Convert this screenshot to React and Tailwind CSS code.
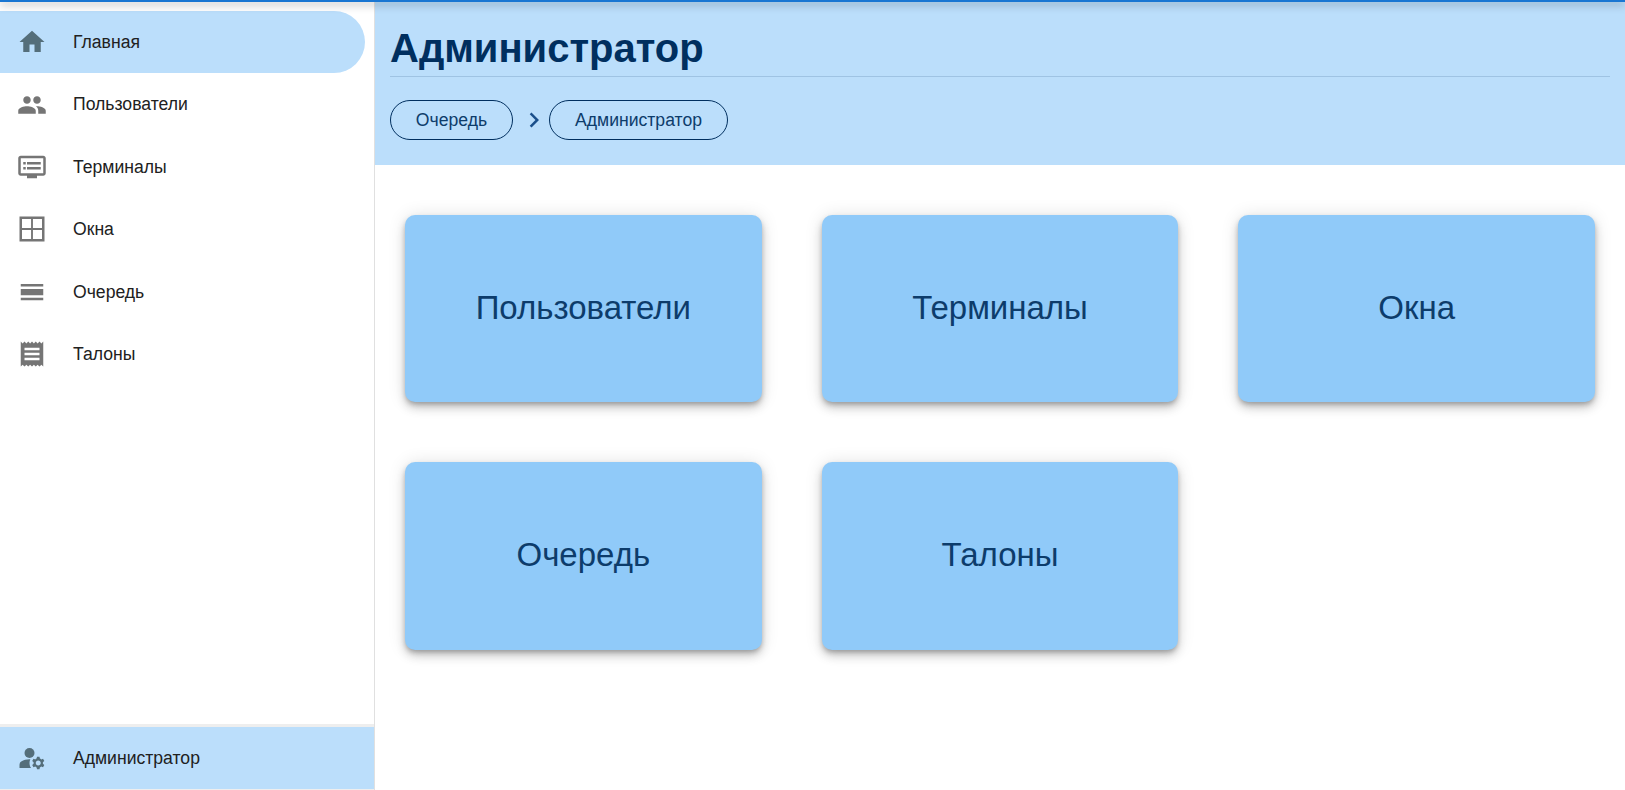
const icons = {
  home: <path d="M10 20v-6h4v6h5v-8h3L12 3 2 12h3v8z" />,
  people: (
    <path d="M16 11c1.66 0 2.99-1.34 2.99-3S17.66 5 16 5c-1.66 0-3 1.34-3 3s1.34 3 3 3zm-8 0c1.66 0 2.99-1.34 2.99-3S9.66 5 8 5C6.34 5 5 6.34 5 8s1.34 3 3 3zm0 2c-2.33 0-7 1.17-7 3.5V19h14v-2.5c0-2.33-4.67-3.5-7-3.5zm8 0c-.29 0-.62.02-.97.05 1.16.84 1.97 1.97 1.97 3.45V19h6v-2.5c0-2.33-4.67-3.5-7-3.5z" />
  ),
  dvr: (
    <path d="M21 3H3c-1.1 0-2 .9-2 2v12c0 1.1.9 2 2 2h5v2h8v-2h5c1.1 0 1.99-.9 1.99-2L23 5c0-1.1-.9-2-2-2zm0 14H3V5h18v12zm-2-9H8v2h11V8zm0 4H8v2h11v-2zM7 8H5v2h2V8zm0 4H5v2h2v-2z" />
  ),
  windows: (
    <path d="M2 2v20h20V2H2zm9.25 18H4v-7.25h7.25V20zm0-8.75H4V4h7.25v7.25zM20 20h-7.25v-7.25H20V20zm0-8.75h-7.25V4H20v7.25z" />
  ),
  queue: <path d="M3 5.5h18v2H3v-2zm0 4h18v5H3v-5zm0 7h18v2H3v-2z" />,
  receipt: (
    <path d="M18 17H6v-2h12v2zm0-4H6v-2h12v2zm0-4H6V7h12v2zM3 22l1.5-1.5L6 22l1.5-1.5L9 22l1.5-1.5L12 22l1.5-1.5L15 22l1.5-1.5L18 22l1.5-1.5L21 22V2l-1.5 1.5L18 2l-1.5 1.5L15 2l-1.5 1.5L12 2l-1.5 1.5L9 2 7.5 3.5 6 2 4.5 3.5 3 2v20z" />
  ),
  admin: (
    <>
      <circle cx="10" cy="8" r="4" />
      <path d="M10.67 13.02c-.22-.01-.44-.02-.67-.02-2.42 0-4.68.67-6.61 1.82-.88.52-1.39 1.5-1.39 2.53V20h9.26c-.79-1.13-1.26-2.51-1.26-4 0-1.07.25-2.07.67-2.98z" />
      <path d="M20.75 16c0-.22-.03-.42-.06-.63l1.14-1.01-1-1.73-1.45.49c-.32-.27-.68-.48-1.08-.63L18 11h-2l-.3 1.49c-.4.15-.76.36-1.08.63l-1.45-.49-1 1.73 1.14 1.01c-.03.21-.06.41-.06.63s.03.42.06.63l-1.14 1.01 1 1.73 1.45-.49c.32.27.68.48 1.08.63L16 21h2l.3-1.49c.4-.15.76-.36 1.08-.63l1.45.49 1-1.73-1.14-1.01c.03-.21.06-.41.06-.63zM17 18c-1.1 0-2-.9-2-2s.9-2 2-2 2 .9 2 2-.9 2-2 2z" />
    </>
  ),
};

const navItems = [
  { label: "Главная", icon: "home", active: true },
  { label: "Пользователи", icon: "people" },
  { label: "Терминалы", icon: "dvr" },
  { label: "Окна", icon: "windows" },
  { label: "Очередь", icon: "queue" },
  { label: "Талоны", icon: "receipt" },
];

const cards = ["Пользователи", "Терминалы", "Окна", "Очередь", "Талоны"];

function Icon({ name, className }) {
  return (
    <svg viewBox="0 0 24 24" fill="currentColor" className={className}>
      {icons[name]}
    </svg>
  );
}

function NavRow({ item }) {
  return (
    <div
      className={`flex h-[62.4px] items-center pl-[16.5px] ${
        item.active ? "mr-[9px] rounded-r-[32px] bg-[#bbdefb]" : ""
      }`}
    >
      <Icon
        name={item.icon}
        className={`h-[30px] w-[30px] ${item.active ? "text-[#546e7a]" : "text-[#757575]"}`}
      />
      <span className="ml-[26.5px] text-[17.6px] text-[#212121]">{item.label}</span>
    </div>
  );
}

export default function App() {
  return (
    <div className="relative flex h-[790px] overflow-hidden bg-white font-['Liberation_Sans',Arial,sans-serif]">
      <div className="absolute inset-x-0 top-0 z-10 h-[2px] bg-[#1976d2] shadow-[0_2px_8px_rgba(0,0,0,0.55)]" />

      <aside className="flex w-[375px] shrink-0 flex-col border-r border-[#e0e0e0] bg-white">
        <nav className="flex-1 pt-[11px]">
          {navItems.map((item) => (
            <NavRow key={item.label} item={item} />
          ))}
        </nav>
        <div className="border-t-[3px] border-b border-[#eeeeee]">
          <div className="flex h-[62px] items-center bg-[#bbdefb] pl-[16.5px]">
            <Icon name="admin" className="h-[30px] w-[30px] text-[#546e7a]" />
            <span className="ml-[26.5px] text-[17.6px] text-[#212121]">Администратор</span>
          </div>
        </div>
      </aside>

      <main className="flex-1">
        <header className="h-[165px] bg-[#bbdefb] px-[15px] pt-[20px]">
          <h1 className="h-[56px] text-[40px] leading-[56px] font-bold text-[#002f5f]">
            Администратор
          </h1>
          <div className="h-px bg-[#9fc3e3]" />
          <div className="mt-[23px] flex items-center text-[17.6px] text-[#0d3c6b]">
            <div className="flex h-[40px] w-[123px] items-center justify-center rounded-[20px] border border-[#002f5f]">
              Очередь
            </div>
            <svg viewBox="0 0 24 24" fill="#1a4f8b" className="ml-[6px] h-[30px] w-[30px]">
              <path d="M10 6 8.59 7.41 13.17 12l-4.58 4.59L10 18l6-6z" />
            </svg>
            <div className="flex h-[40px] w-[179px] items-center justify-center rounded-[20px] border border-[#002f5f]">
              Администратор
            </div>
          </div>
        </header>

        <section className="grid grid-cols-3 grid-rows-[187px_188px] gap-[60px] px-[30px] pt-[50px]">
          {cards.map((label) => (
            <div
              key={label}
              className="flex items-center justify-center rounded-[10px] bg-[#90caf9] pb-[2px] text-[33px] text-[#0d3c6b] shadow-[0_3px_5px_-1px_rgba(0,0,0,0.25),0_6px_10px_0_rgba(0,0,0,0.16),0_1px_18px_0_rgba(0,0,0,0.12)]"
            >
              {label}
            </div>
          ))}
        </section>
      </main>
    </div>
  );
}
